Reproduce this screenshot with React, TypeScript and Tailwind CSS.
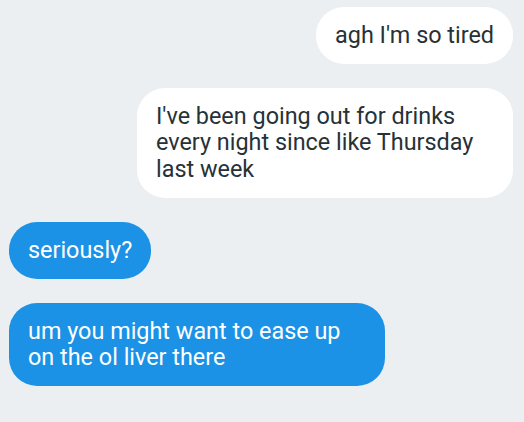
const MESSAGES: { text: string; mine: boolean }[] = [
  { text: "agh I'm so tired", mine: true },
  { text: "I've been going out for drinks every night since like Thursday last week", mine: true },
  { text: "seriously?", mine: false },
  { text: "um you might want to ease up on the ol liver there", mine: false },
];

export default function App() {
  return (
    <main
      className="min-h-screen bg-[#eceff1] pl-[9px] pr-[11px] pt-[7px]"
      style={{ fontFamily: "Roboto, 'Liberation Sans', sans-serif" }}
    >
      <div className="flex flex-col gap-6">
        {MESSAGES.map((m, i) => (
          <div key={i} className={m.mine ? "flex justify-end" : "flex justify-start"}>
            <div
              className={
                m.mine
                  ? "max-w-[376px] rounded-[28px] bg-white px-[19px] py-[15px] text-[23.4px] leading-[26.7px] text-[#263238]"
                  : "max-w-[376px] rounded-[28px] bg-[#1b92e6] px-[19px] py-[15px] text-[23.4px] leading-[26.7px] text-white"
              }
            >
              {m.text}
            </div>
          </div>
        ))}
      </div>
    </main>
  );
}
